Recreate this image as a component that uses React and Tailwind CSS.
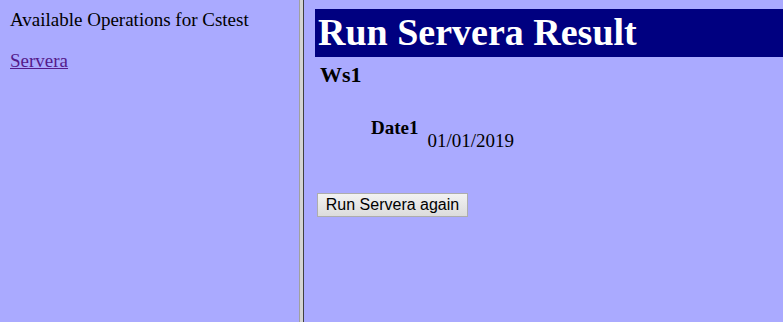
import React from 'react';

const serif = { fontFamily: '"Liberation Serif", "Times New Roman", serif' };

export default function App() {
  return (
    <div className="flex h-screen w-full bg-[#aaaaff] text-black" style={serif}>
      {/* Left frame: operation list */}
      <div className="w-[299px] shrink-0 pl-[10px] pt-[9px] text-[19px] leading-[21px]">
        <p>Available Operations for Cstest</p>
        <p className="mt-[20px]">
          <a href="#" className="text-[#551a8b] underline">Servera</a>
        </p>
      </div>

      {/* Frame divider */}
      <div className="flex w-[5px] shrink-0">
        <div className="w-px bg-[#a0a0a0]" />
        <div className="w-[3px] bg-[#d4d4d4]" />
        <div className="w-px bg-[#404040]" />
      </div>

      {/* Right frame: result */}
      <div className="flex-1 pl-[11px] pt-[9px]">
        <h1 className="h-[48px] bg-[#000080] pl-[3px] text-[38px] font-bold leading-[47px] text-white">
          Run Servera Result
        </h1>
        <h3 className="mt-[5px] pl-[5px] text-[22px] font-bold leading-[25px]">Ws1</h3>

        <div className="mt-[30px] flex items-start pl-[56px] text-[19px] leading-[22px]">
          <span className="font-bold">Date1</span>
          <span className="ml-[9px] mt-[13px]">01/01/2019</span>
        </div>

        <button
          className="ml-[2px] mt-[41px] h-[24px] w-[151px] border border-[#adadad] bg-gradient-to-b from-[#f2f2f2] to-[#dcdcdc] text-[16px] leading-none text-black"
          style={{ fontFamily: '"Liberation Sans", Arial, sans-serif' }}
        >
          Run Servera again
        </button>
      </div>
    </div>
  );
}
